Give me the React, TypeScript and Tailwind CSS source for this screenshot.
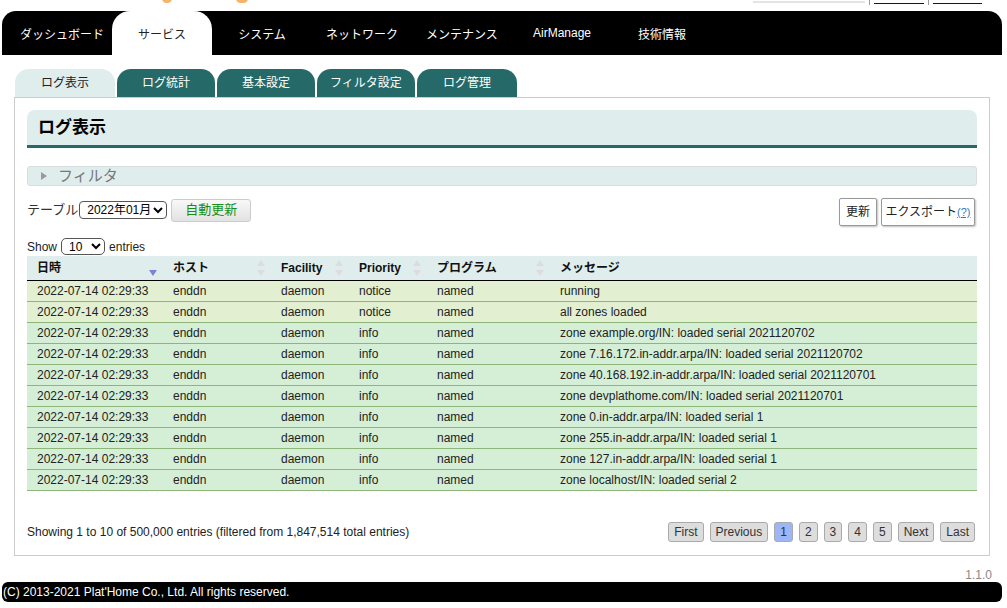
import React from 'react';

const navItems = ['ダッシュボード', 'サービス', 'システム', 'ネットワーク', 'メンテナンス', 'AirManage', '技術情報'];
const subTabs = [
  { label: 'ログ表示', w: 'w-[100px]' },
  { label: 'ログ統計', w: 'w-[98px]' },
  { label: '基本設定', w: 'w-[98px]' },
  { label: 'フィルタ設定', w: 'w-[98px]' },
  { label: 'ログ管理', w: 'w-[100px]' },
];

const rows = [
  { pri: 'notice', msg: 'running' },
  { pri: 'notice', msg: 'all zones loaded' },
  { pri: 'info', msg: 'zone example.org/IN: loaded serial 2021120702' },
  { pri: 'info', msg: 'zone 7.16.172.in-addr.arpa/IN: loaded serial 2021120702' },
  { pri: 'info', msg: 'zone 40.168.192.in-addr.arpa/IN: loaded serial 2021120701' },
  { pri: 'info', msg: 'zone devplathome.com/IN: loaded serial 2021120701' },
  { pri: 'info', msg: 'zone 0.in-addr.arpa/IN: loaded serial 1' },
  { pri: 'info', msg: 'zone 255.in-addr.arpa/IN: loaded serial 1' },
  { pri: 'info', msg: 'zone 127.in-addr.arpa/IN: loaded serial 1' },
  { pri: 'info', msg: 'zone localhost/IN: loaded serial 2' },
];

const cols = [
  { label: '日時', w: 'w-[136px]', sort: 'desc' },
  { label: 'ホスト', w: 'w-[108px]', sort: 'both' },
  { label: 'Facility', w: 'w-[78px]', sort: 'both' },
  { label: 'Priority', w: 'w-[78px]', sort: 'both' },
  { label: 'プログラム', w: 'w-[123px]', sort: 'both' },
  { label: 'メッセージ', w: 'flex-1', sort: '' },
];

const SortIcon: React.FC<{ type: string }> = ({ type }) => {
  if (type === 'desc') {
    return (
      <svg width="10" height="8" viewBox="0 0 10 8" className="mt-[10px]">
        <path d="M1 1 L9 1 L5 7 Z" fill="#8080d8" />
      </svg>
    );
  }
  if (type === 'both') {
    return (
      <svg width="10" height="18" viewBox="0 0 10 18">
        <path d="M5 1 L9 7 L1 7 Z" fill="#dcdcdc" />
        <path d="M1 11 L9 11 L5 17 Z" fill="#dcdcdc" />
      </svg>
    );
  }
  return null;
};

const PageBtn: React.FC<{ label: string; active?: boolean }> = ({ label, active }) => (
  <span
    className={`h-[20px] px-[5px] min-w-[18px] flex items-center justify-center rounded-[3px] border border-[#aaa] text-[12px] text-[#333] ${
      active ? 'bg-[#9db6f7]' : 'bg-[#dddddd]'
    }`}
  >
    {label}
  </span>
);

const App: React.FC = () => {
  return (
    <div className="w-[1007px] h-[608px] bg-white font-['Liberation_Sans','Noto_Sans_CJK_JP',sans-serif] text-[#222] overflow-hidden">
      <div className="w-[1000px] ml-[2px]">
        {/* top strip: only the bottom edge of the header shows */}
        <div className="h-[11px] overflow-hidden relative">
          <span className="absolute left-[160px] -top-[6px] w-[10px] h-[9px] rounded-full bg-[#f6b36b]" />
          <span className="absolute left-[234px] -top-[6px] w-[12px] h-[9px] rounded-full bg-[#f6b36b]" />
          <div className="absolute right-[20px] top-0 flex items-start gap-[4px]">
            <span className="w-[112px] h-[2px] mt-[1px] bg-[#e4e4e4]" />
            <span className="w-[1px] h-[5px] bg-[#999]" />
            <span className="w-[50px] h-[1px] mt-[3px] bg-[#0000cc]" />
            <span className="w-[1px] h-[5px] bg-[#999]" />
            <span className="w-[49px] h-[1px] mt-[3px] bg-[#0000cc]" />
          </div>
        </div>

        {/* main nav */}
        <div className="h-[44px] bg-black rounded-t-[14px] flex pl-[10px]">
          {navItems.map((item) => (
            <div
              key={item}
              className={`w-[100px] h-full flex items-center justify-center pt-[4px] text-[12px] ${
                item === 'サービス' ? 'bg-white text-[#222] rounded-t-[18px]' : 'text-white'
              } ${item === 'AirManage' ? 'pb-[4px]' : ''}`}
            >
              {item}
            </div>
          ))}
        </div>

        {/* sub tabs */}
        <div className="flex gap-[2px] pl-[13px] pt-[14px]">
          {subTabs.map((t, i) => (
            <div
              key={t.label}
              className={`${t.w} h-[28px] flex items-center justify-center rounded-t-[14px] text-[12px] ${
                i === 0 ? 'bg-[#e0eded] text-[#222]' : 'bg-[#256a68] text-white'
              }`}
            >
              {t.label}
            </div>
          ))}
        </div>

        {/* panel */}
        <div className="mx-[12px] border border-[#cccccc] px-[12px] pt-[12px] h-[459px]">
          <div className="h-[38px] bg-[#e0eded] rounded-t-[8px] border-b-[3px] border-[#256a68] flex items-center pl-[11px]">
            <h2 className="text-[17px] font-bold text-black">ログ表示</h2>
          </div>

          <div className="mt-[18px] h-[20px] bg-[#e0eded] border border-[#d8dede] rounded-[3px] flex items-center pl-[13px]">
            <svg width="6" height="8" viewBox="0 0 6 8">
              <path d="M0 0 L6 4 L0 8 Z" fill="#999" />
            </svg>
            <span className="ml-[11px] text-[15px] text-[#777]">フィルタ</span>
          </div>

          <div className="mt-[12px] flex items-start justify-between">
            <div className="flex items-center text-[13px] text-[#333] h-[24px]">
              <span>テーブル</span>
              <select className="ml-[1px] h-[18px] border border-[#555] rounded-[4px] text-[12px] text-black pl-[3px] w-[88px] bg-white">
                <option>2022年01月</option>
              </select>
              <button className="ml-[4px] h-[23px] w-[80px] border border-[#ccc] rounded-[3px] bg-gradient-to-b from-[#f8f8f8] to-[#e2e2e2] text-[13px] text-[#148f14]">
                自動更新
              </button>
            </div>
            <div className="flex gap-[4px] pr-[2px]">
              <button className="h-[28px] w-[38px] border border-[#999] rounded-[2px] bg-white shadow-[1px_1px_2px_rgba(0,0,0,0.25)] text-[12px] text-[#222]">
                更新
              </button>
              <button className="h-[28px] w-[94px] border border-[#999] rounded-[2px] bg-white shadow-[1px_1px_2px_rgba(0,0,0,0.25)] text-[12px] text-[#222]">
                エクスポート<span className="text-[11px] text-[#3a78c0] underline">(?)</span>
              </button>
            </div>
          </div>

          <div className="mt-[12px] flex items-center text-[12px] text-[#222] h-[17px]">
            <span>Show</span>
            <select className="mx-[4px] h-[17px] w-[44px] border border-[#555] rounded-[5px] text-[12px] text-black pl-[3px] bg-white">
              <option>10</option>
            </select>
            <span>entries</span>
          </div>

          <div className="mt-[1px]">
            <div className="flex h-[25px] bg-[#e0eded] border-b border-black">
              {cols.map((c) => (
                <div key={c.label} className={`${c.w} flex items-center justify-between pl-[10px] pr-[5px] text-[12px] font-bold text-[#111]`}>
                  <span>{c.label}</span>
                  <SortIcon type={c.sort} />
                </div>
              ))}
            </div>
            {rows.map((r, i) => (
              <div
                key={i}
                className={`flex h-[21px] border-b border-[#8fb67a] text-[12px] text-[#222] ${
                  r.pri === 'notice' ? 'bg-[#e2efd1]' : 'bg-[#d5eed6]'
                }`}
              >
                <div className="w-[136px] pl-[10px] flex items-center">2022-07-14 02:29:33</div>
                <div className="w-[108px] pl-[10px] flex items-center">enddn</div>
                <div className="w-[78px] pl-[10px] flex items-center">daemon</div>
                <div className="w-[78px] pl-[10px] flex items-center">{r.pri}</div>
                <div className="w-[123px] pl-[10px] flex items-center">named</div>
                <div className="flex-1 pl-[10px] flex items-center">{r.msg}</div>
              </div>
            ))}
          </div>

          <div className="mt-[31px] flex items-center justify-between">
            <span className="text-[12px] text-[#222]">Showing 1 to 10 of 500,000 entries (filtered from 1,847,514 total entries)</span>
            <div className="flex gap-[6px] pr-[2px]">
              <PageBtn label="First" />
              <PageBtn label="Previous" />
              <PageBtn label="1" active />
              <PageBtn label="2" />
              <PageBtn label="3" />
              <PageBtn label="4" />
              <PageBtn label="5" />
              <PageBtn label="Next" />
              <PageBtn label="Last" />
            </div>
          </div>
        </div>

        <div className="h-[26px] flex items-center justify-end pr-[10px] pt-[11px] text-[12px] text-[#888]">1.1.0</div>

        <div className="h-[20px] bg-black rounded-[6px] flex items-center pl-[1px] text-[12px] text-white">
          (C) 2013-2021 Plat'Home Co., Ltd. All rights reserved.
        </div>
      </div>
    </div>
  );
};

export default App;
